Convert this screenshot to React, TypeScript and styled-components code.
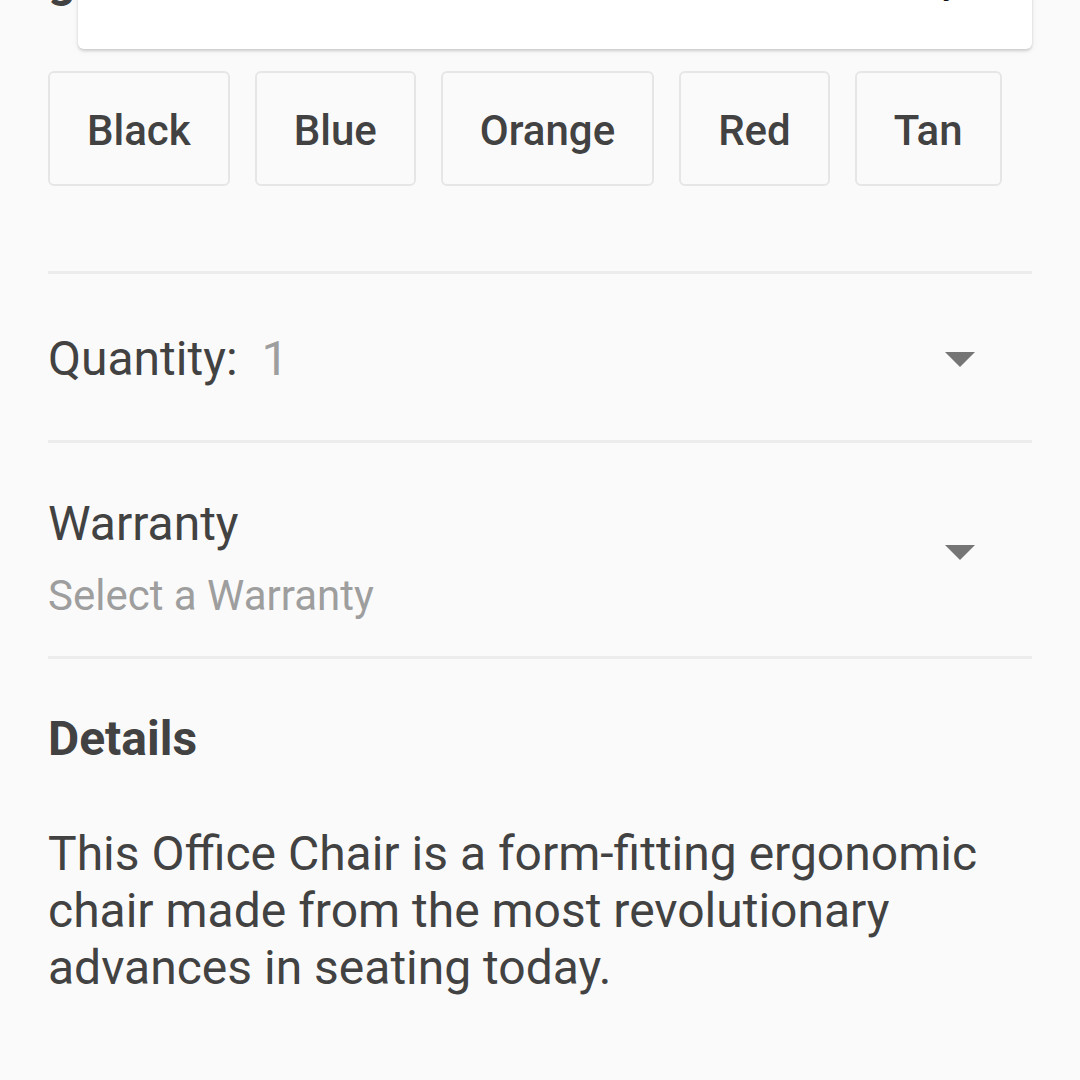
import * as React from "react";
import styled, { createGlobalStyle } from "styled-components";

const GlobalStyle = createGlobalStyle`
  html, body {
    margin: 0;
    padding: 0;
    background: #fafafa;
    font-family: Roboto, "Noto Sans", sans-serif;
    color: #424242;
    overflow: hidden;
  }
`;

const colors = ["Black", "Blue", "Orange", "Red", "Tan"];

const Caret = () => (
  <CaretIcon width="30" height="15" viewBox="0 0 30 15">
    <path d="M0 0 L30 0 L15 15 Z" fill="#757575" />
  </CaretIcon>
);

export default function App() {
  return (
    <Page>
      <GlobalStyle />
      <Section>
        <ColorHeading>gray</ColorHeading>
        <Popup>
          <PopupText>Availability</PopupText>
        </Popup>
        <Swatches>
          {colors.map((c) => (
            <Swatch key={c}>{c}</Swatch>
          ))}
        </Swatches>
      </Section>
      <Divider />
      <SelectRow tall={false}>
        <SelectLabel>
          <LabelText>Quantity:</LabelText>
          <Value>1</Value>
        </SelectLabel>
        <Caret />
      </SelectRow>
      <Divider />
      <SelectRow tall>
        <LabelStack>
          <LabelText>Warranty</LabelText>
          <Hint>Select a Warranty</Hint>
        </LabelStack>
        <Caret />
      </SelectRow>
      <Divider />
      <Details>
        <DetailsTitle>Details</DetailsTitle>
        <Description>
          This Office Chair is a form-fitting ergonomic chair made from the most
          revolutionary advances in seating today.
        </Description>
      </Details>
    </Page>
  );
}

const Page = styled.div`
  width: 1080px;
  height: 1080px;
  box-sizing: border-box;
  padding: 0 48px;
  overflow: hidden;
`;

const Section = styled.div`
  display: flow-root;
  position: relative;
  padding-bottom: 85px;
`;

const ColorHeading = styled.div`
  font-size: 48px;
  font-weight: 700;
  line-height: 56px;
  margin-top: -48px;
  height: 119px;
`;

const Popup = styled.div`
  position: absolute;
  top: -60px;
  left: 30px;
  right: 0;
  height: 109px;
  background: #fff;
  border-radius: 6px;
  box-shadow: 0 2px 3px rgba(0, 0, 0, 0.16), 0 1px 8px rgba(0, 0, 0, 0.05);
  display: flex;
  justify-content: flex-end;
  padding-right: 70px;
  box-sizing: border-box;
  overflow: hidden;
`;

const PopupText = styled.div`
  font-size: 42px;
  color: #111;
  line-height: 48px;
  margin-top: 14px;
`;

const Swatches = styled.div`
  display: flex;
  gap: 25px;
`;

const Swatch = styled.div`
  height: 115px;
  box-sizing: border-box;
  padding: 4px 37px 0;
  border: 2px solid #e6e6e6;
  border-radius: 6px;
  background: #fafafa;
  display: flex;
  align-items: center;
  font-size: 42px;
  font-weight: 500;
  color: #424242;
`;

const Divider = styled.div`
  height: 3px;
  background: #ececec;
`;

const SelectRow = styled.div<{ tall: boolean }>`
  height: ${(p) => (p.tall ? "213px" : "166px")};
  display: flex;
  align-items: center;
  justify-content: space-between;
  padding-right: 57px;
`;

const CaretIcon = styled.svg`
  margin-top: 5px;
`;

const SelectLabel = styled.div`
  display: flex;
  align-items: baseline;
  gap: 24px;
  padding-top: 3px;
`;

const LabelStack = styled.div`
  padding-top: 17px;
`;

const LabelText = styled.div`
  font-size: 48px;
  line-height: 56px;
  color: #424242;
`;

const Value = styled.span`
  font-size: 48px;
  color: #9e9e9e;
`;

const Hint = styled.div`
  font-size: 42px;
  line-height: 50px;
  margin-top: 19px;
  color: #9e9e9e;
`;

const Details = styled.div`
  padding-top: 52px;
`;

const DetailsTitle = styled.div`
  font-size: 48px;
  font-weight: 700;
  line-height: 56px;
  color: #424242;
`;

const Description = styled.p`
  margin: 58px 0 0;
  font-size: 48px;
  line-height: 57px;
  color: #424242;
`;
